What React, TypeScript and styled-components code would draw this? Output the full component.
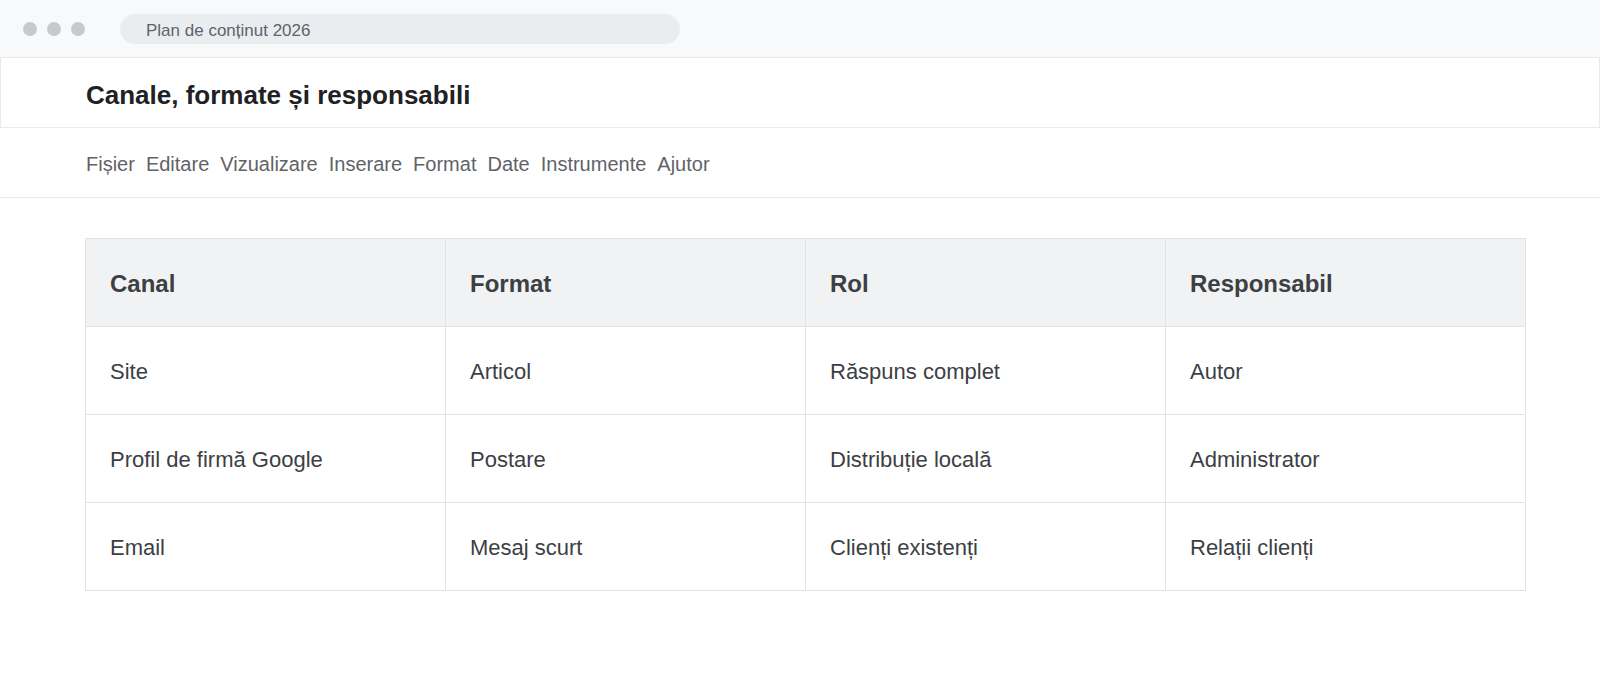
import React from "react";
import styled, { createGlobalStyle } from "styled-components";

const GlobalStyle = createGlobalStyle`
  html, body {
    margin: 0;
    padding: 0;
    background: #ffffff;
    font-family: "Liberation Sans", Arial, Helvetica, sans-serif;
  }
  * { box-sizing: border-box; }
`;

const Window = styled.div`
  width: 1600px;
  min-height: 676px;
  background: #ffffff;
`;

const TitleBar = styled.header`
  height: 58px;
  display: flex;
  align-items: center;
  padding-left: 23px;
  background: #f8f9fa;
  border-bottom: 1px solid #e8eaed;
  gap: 35px;
`;

const Dots = styled.div`
  display: flex;
  gap: 10px;
  margin-top: 1px;
`;

const Dot = styled.span`
  width: 14px;
  height: 14px;
  border-radius: 50%;
  background: #c8c9cc;
`;

const AddressPill = styled.div`
  width: 560px;
  height: 30px;
  border-radius: 15px;
  background: #eaedf0;
  display: flex;
  align-items: center;
  padding: 3px 0 0 26px;
  font-size: 17px;
  color: #5f6368;
  margin-top: 1px;
`;

const DocHeader = styled.div`
  height: 70px;
  border: 1px solid #e8eaed;
  border-top: none;
  display: flex;
  align-items: center;
  padding: 5px 0 0 85px;
`;

const DocTitle = styled.h1`
  margin: 0;
  font-size: 26px;
  font-weight: 700;
  color: #202124;
  letter-spacing: 0;
`;

const MenuBar = styled.nav`
  height: 70px;
  display: flex;
  align-items: center;
  gap: 11px;
  padding: 4px 0 0 86px;
  border-bottom: 1px solid #e8eaed;
`;

const MenuItem = styled.span`
  font-size: 20px;
  color: #5f6368;
`;

const Content = styled.main`
  padding: 40px 0 0 85px;
`;

const Table = styled.table`
  width: 1441px;
  table-layout: fixed;
  border-collapse: collapse;
  border: 1px solid #e2e3e5;
`;

const HeadCell = styled.th`
  height: 88px;
  padding: 3px 24px 0;
  text-align: left;
  font-size: 24px;
  font-weight: 700;
  color: #3c4043;
  background: #f1f2f4;
  border: 1px solid #e2e3e5;
`;

const Cell = styled.td`
  height: 88px;
  padding: 3px 24px 0;
  font-size: 22px;
  color: #3c4043;
  border: 1px solid #e2e3e5;
`;

const menu = [
  "Fișier",
  "Editare",
  "Vizualizare",
  "Inserare",
  "Format",
  "Date",
  "Instrumente",
  "Ajutor",
];

const columns = ["Canal", "Format", "Rol", "Responsabil"];

const rows = [
  ["Site", "Articol", "Răspuns complet", "Autor"],
  ["Profil de firmă Google", "Postare", "Distribuție locală", "Administrator"],
  ["Email", "Mesaj scurt", "Clienți existenți", "Relații clienți"],
];

export default function App() {
  return (
    <>
      <GlobalStyle />
      <Window>
        <TitleBar>
          <Dots>
            <Dot />
            <Dot />
            <Dot />
          </Dots>
          <AddressPill>Plan de conținut 2026</AddressPill>
        </TitleBar>
        <DocHeader>
          <DocTitle>Canale, formate și responsabili</DocTitle>
        </DocHeader>
        <MenuBar>
          {menu.map((m) => (
            <MenuItem key={m}>{m}</MenuItem>
          ))}
        </MenuBar>
        <Content>
          <Table>
            <thead>
              <tr>
                {columns.map((c) => (
                  <HeadCell key={c}>{c}</HeadCell>
                ))}
              </tr>
            </thead>
            <tbody>
              {rows.map((r) => (
                <tr key={r[0]}>
                  {r.map((v) => (
                    <Cell key={v}>{v}</Cell>
                  ))}
                </tr>
              ))}
            </tbody>
          </Table>
        </Content>
      </Window>
    </>
  );
}
